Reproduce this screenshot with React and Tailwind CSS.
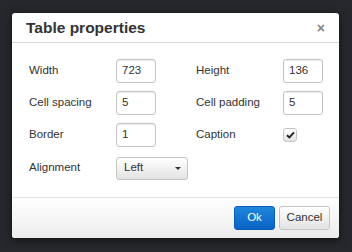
import { ChevronDown } from "lucide-react";

const font = { fontFamily: '"Liberation Sans", Arial, sans-serif' };

function Field({ label, children }) {
  return (
    <div className="flex items-center h-6">
      <span className="w-[87px] text-[11.5px] text-[#333]">{label}</span>
      {children}
    </div>
  );
}

function TextBox({ value }) {
  return (
    <div className="w-10 h-6 flex items-center px-[5px] border border-[#c5c5c5] rounded-[3px] bg-white text-[11.5px] text-[#333] shadow-[inset_0_1px_1px_rgba(0,0,0,0.08)]">
      {value}
    </div>
  );
}

export default function App() {
  return (
    <div
      className="w-[352px] h-[252px] bg-[#27282d] pt-[13px] pl-[12px]"
      style={font}
    >
      <div className="w-[327px] h-[225px] bg-white rounded-[3px] flex flex-col overflow-hidden shadow-[0_2px_8px_rgba(0,0,0,0.6)]">
        {/* Header */}
        <div className="h-[30px] flex items-center justify-between pl-[14px] pr-[14px] border-b border-[#d6d6d6]">
          <span className="text-[15.5px] font-bold text-[#333] pt-[1px]">Table properties</span>
          <span className="text-[14px] font-bold text-[#858585] leading-none">×</span>
        </div>

        {/* Body */}
        <div className="flex-1 flex pl-[17px] pt-[16px]">
          <div className="flex flex-col gap-2 w-[167px]">
            <Field label="Width"><TextBox value="723" /></Field>
            <Field label="Cell spacing"><TextBox value="5" /></Field>
            <Field label="Border"><TextBox value="1" /></Field>
            <div className="flex items-center h-6 mt-[1px]">
              <span className="w-[87px] text-[11.5px] text-[#333]">Alignment</span>
              <div className="w-[72px] h-[23px] flex items-center justify-between pl-[7px] pr-[6px] border border-[#c5c5c5] rounded-[3px] bg-gradient-to-b from-white to-[#e3e3e3] text-[11.5px] text-[#333]">
                <span>Left</span>
                <span className="w-0 h-0 border-l-[3px] border-r-[3px] border-t-[3px] border-l-transparent border-r-transparent border-t-[#333]" />
              </div>
            </div>
          </div>
          <div className="flex flex-col gap-2">
            <Field label="Height"><TextBox value="136" /></Field>
            <Field label="Cell padding"><TextBox value="5" /></Field>
            <Field label="Caption">
              <div className="w-[14px] h-[14px] flex items-center justify-center border border-[#c5c5c5] rounded-[3px] bg-gradient-to-b from-white to-[#e3e3e3]">
                <svg width="9" height="8" viewBox="0 0 9 8">
                  <path d="M1 4.2 L3.4 6.4 L8 1.4" stroke="#222" strokeWidth="1.9" fill="none" />
                </svg>
              </div>
            </Field>
          </div>
        </div>

        {/* Footer */}
        <div className="h-[41px] flex items-center justify-end gap-1 pr-[9px] border-t border-[#e2e2e2] bg-gradient-to-b from-white to-[#ececec]">
          <button className="w-[41px] h-[24px] rounded-[3px] border border-[#0b5cb5] bg-gradient-to-b from-[#1e86dc] to-[#0a63c6] text-white text-[11.5px]">
            Ok
          </button>
          <button className="w-[51px] h-[24px] rounded-[3px] border border-[#c5c5c5] bg-gradient-to-b from-white to-[#e3e3e3] text-[#333] text-[11.5px]">
            Cancel
          </button>
        </div>
      </div>
    </div>
  );
}
